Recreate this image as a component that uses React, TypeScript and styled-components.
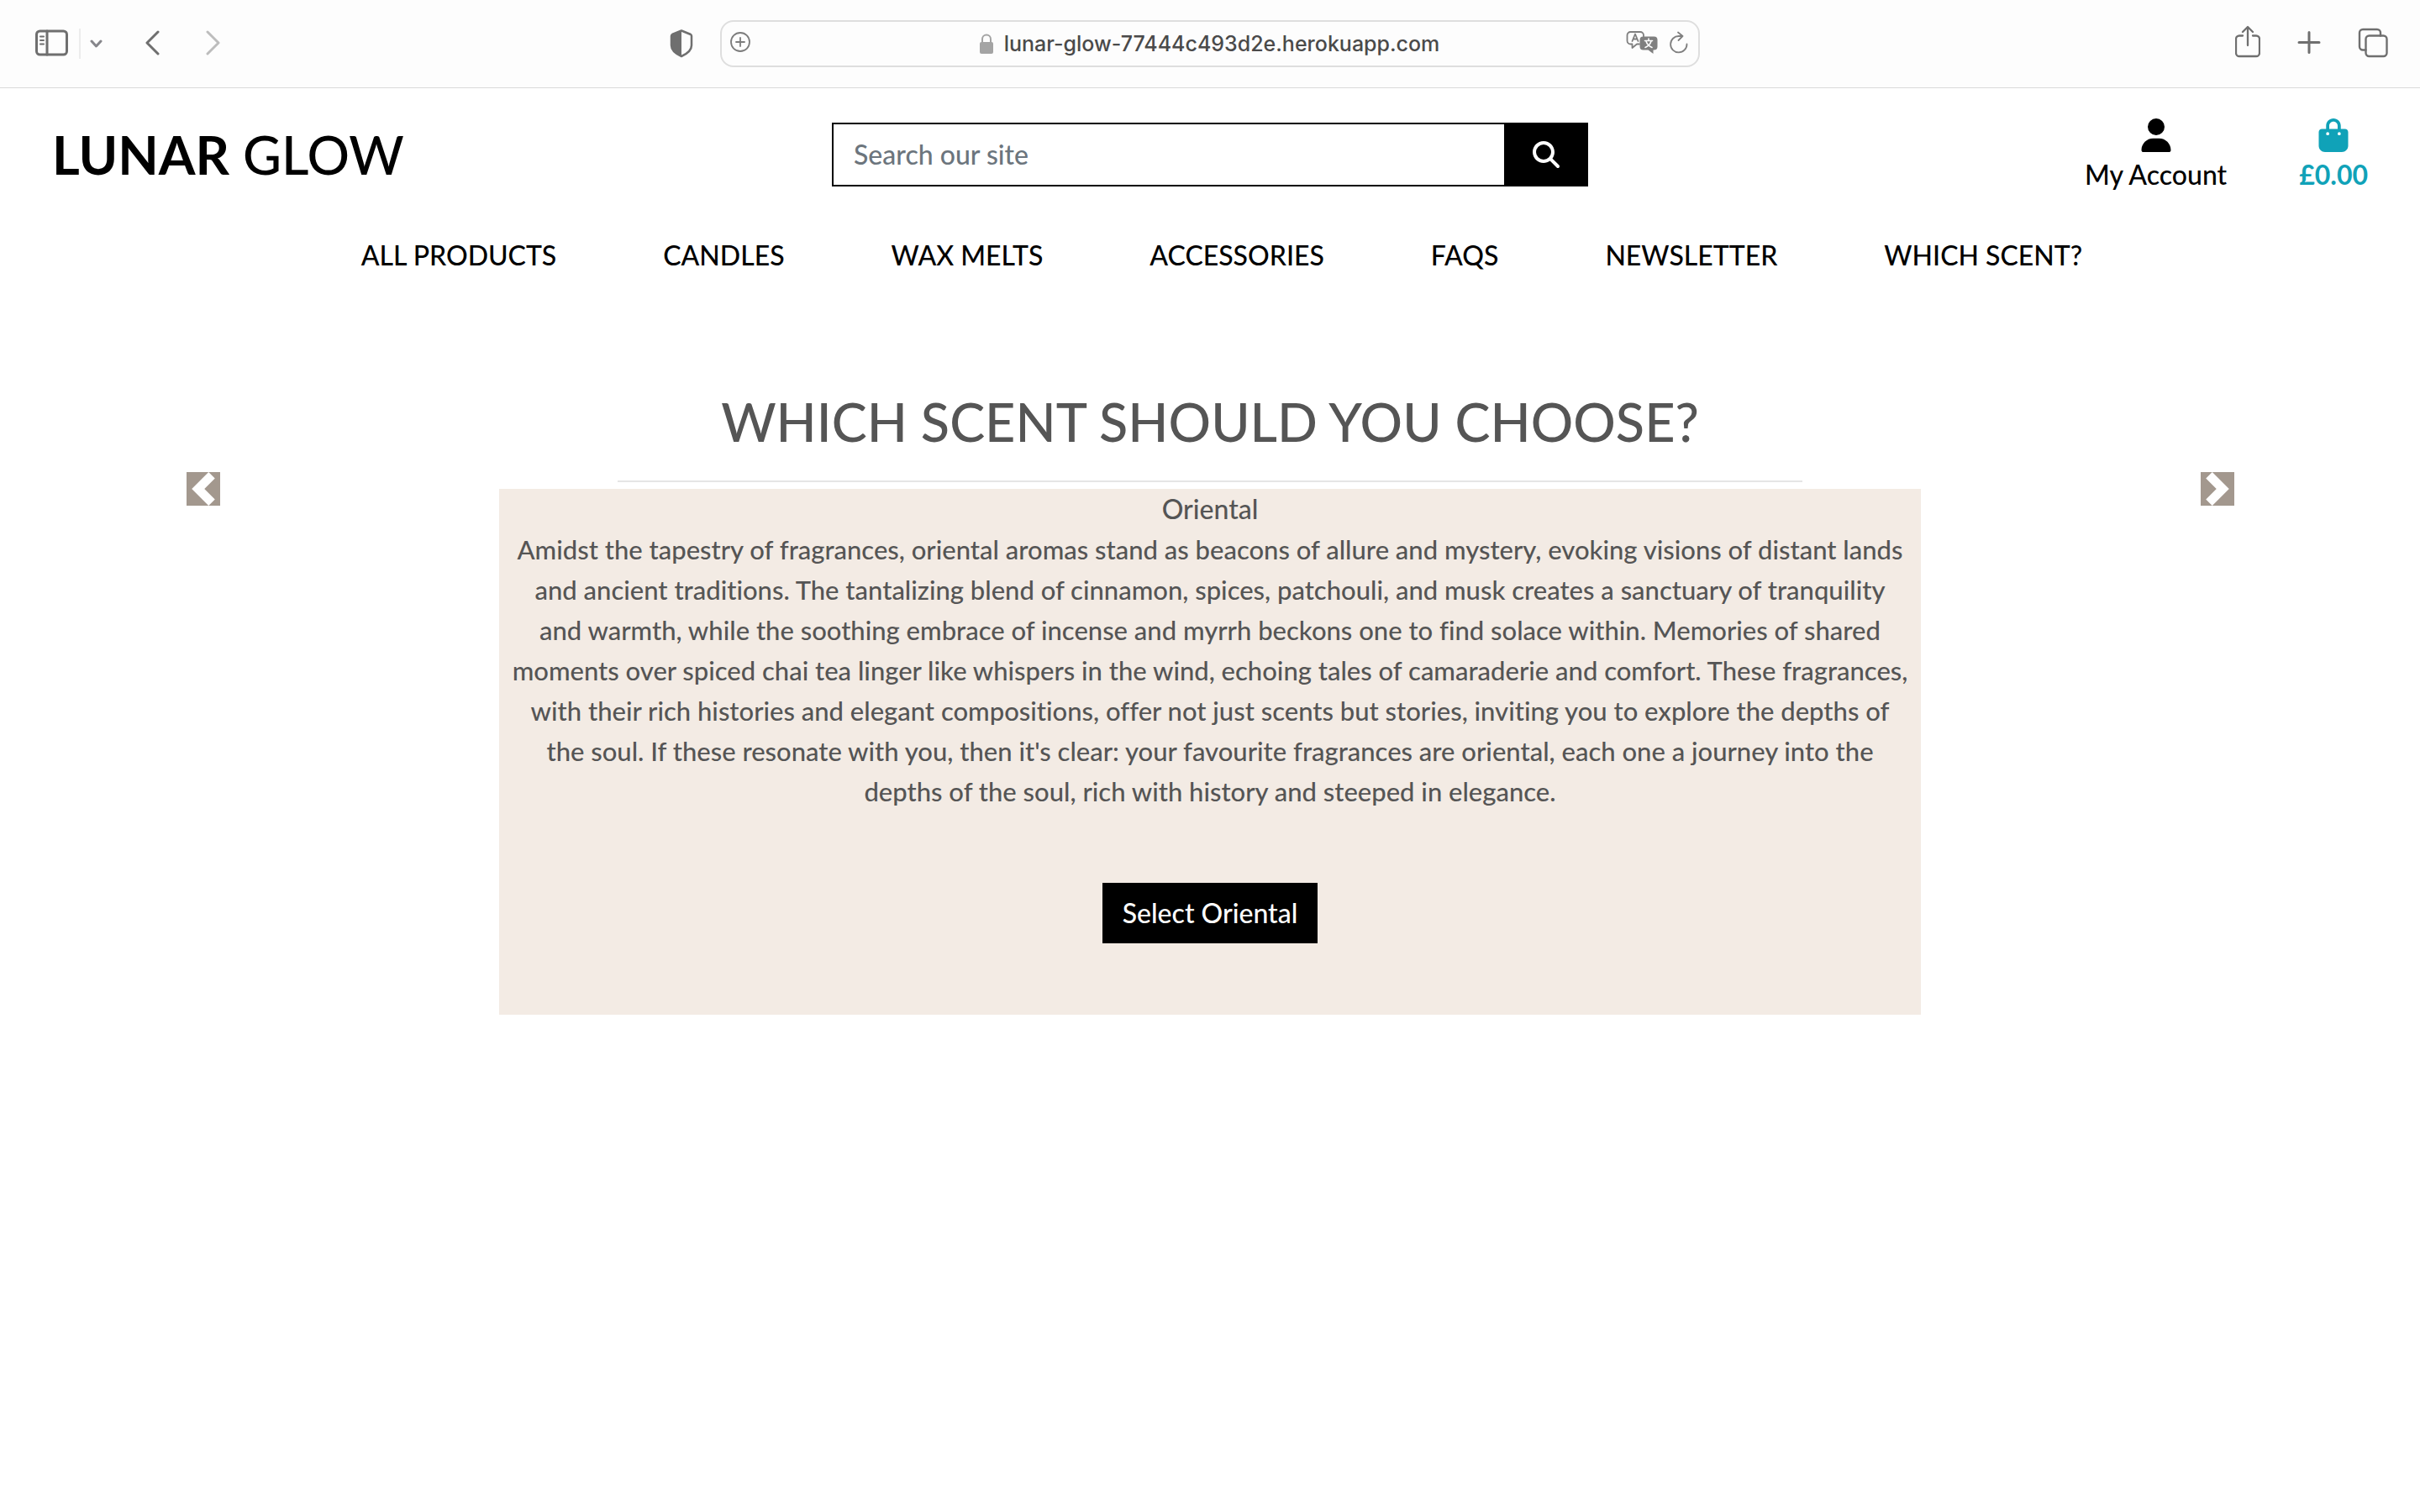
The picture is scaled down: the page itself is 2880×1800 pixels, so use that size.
import React, { Fragment } from "react";
import styled, { createGlobalStyle } from "styled-components";
import { FaBagShopping, FaMagnifyingGlass, FaUser } from "react-icons/fa6";

const GlobalStyle = createGlobalStyle`
  *, *::before, *::after { box-sizing: border-box; }
  body {
    margin: 0;
    background: #fff;
    color: #555;
    font-family: Lato, "Liberation Sans", sans-serif;
    font-size: 32px;
    font-weight: 500;
    line-height: 48px;
    font-variant-ligatures: none;
  }
  button, input { font: inherit; }
`;

/* ---------- Browser toolbar ---------- */

const Toolbar = styled.div`
  display: grid;
  grid-template-columns: minmax(0, 1fr) minmax(0, 1166px) minmax(0, 1fr);
  align-items: center;
  padding: 24px 38px;
  background: #fdfdfd;
  border-bottom: 1px solid #d9d9d9;
`;

const ToolGroup = styled.div<{ $end?: boolean; $gap?: number }>`
  display: flex;
  align-items: center;
  justify-content: ${(p) => (p.$end ? "flex-end" : "flex-start")};
  gap: ${(p) => p.$gap ?? 0}px;
`;

const ToolButton = styled.button<{ $tone?: string }>`
  display: flex;
  padding: 0;
  border: 0;
  background: none;
  color: ${(p) => p.$tone ?? "#6f6f6f"};

  svg {
    display: block;
    fill: none;
    stroke: currentColor;
    stroke-width: 3;
    stroke-linecap: round;
    stroke-linejoin: round;
  }
`;

const ToolDivider = styled.span`
  width: 2px;
  height: 36px;
  margin: 0 11px 0 12px;
  background: #ececec;
`;

const HistoryButtons = styled.div`
  display: flex;
  gap: 54px;
  margin-left: 50px;
`;

const ShieldSlot = styled.div`
  margin: 0 32px 0 auto;
`;

const AddressBar = styled.div`
  display: grid;
  grid-template-columns: 1fr auto 1fr;
  align-items: center;
  height: 56px;
  padding: 0 12px 0 10px;
  border: 2px solid #dedede;
  border-radius: 16px;
`;

const AddressLabel = styled.label`
  display: flex;
  align-items: center;
  gap: 12px;
  color: #a4a4a4;
`;

const AddressInput = styled.input`
  field-sizing: content;
  padding: 0;
  border: 0;
  background: none;
  color: #4a4a4a;
  font-family: Inter, "Liberation Sans", sans-serif;
  font-size: 25px;
  line-height: 36px;
`;

/* ---------- Shop header ---------- */

const Header = styled.header`
  padding: 36px 62px 0;
`;

const HeaderRow = styled.div`
  display: grid;
  grid-template-columns: minmax(0, 1fr) minmax(0, 900px) minmax(0, 1fr);
  align-items: center;
`;

const Logo = styled.a`
  color: #000;
  font-size: 63px;
  line-height: 78px;
  text-decoration: none;
`;

const SearchForm = styled.form`
  display: flex;
  height: 76px;
`;

const SearchInput = styled.input`
  flex: 1;
  min-width: 0;
  padding: 0 24px;
  border: 2px solid #000;
  border-right: 0;
  border-radius: 0;
  background: #fff;

  &::placeholder {
    color: #6c757d;
    opacity: 1;
  }
`;

const SearchButton = styled.button`
  display: flex;
  align-items: center;
  justify-content: center;
  width: 100px;
  border: 0;
  background: #000;
  color: #fff;
`;

const AccountLinks = styled.div`
  display: flex;
  justify-content: flex-end;
  gap: 86px;
`;

const AccountLink = styled.a<{ $accent?: boolean }>`
  display: flex;
  flex-direction: column;
  align-items: center;
  gap: 8px;
  color: ${(p) => (p.$accent ? "#10a2b8" : "#000")};
  font-weight: ${(p) => (p.$accent ? 700 : 500)};
  line-height: 38px;
  text-decoration: none;
`;

const Nav = styled.nav`
  display: flex;
  justify-content: center;
  gap: 127px;
  margin-top: 53px;
  padding-left: 28px;
`;

const NavLink = styled.a`
  color: #000;
  text-decoration: none;
  text-transform: uppercase;
  white-space: nowrap;
`;

/* ---------- Scent carousel ---------- */

const Carousel = styled.main`
  display: grid;
  grid-template-columns: 15% minmax(0, 1fr) 15%;
  align-items: start;
  margin: 135px 30px 0;
`;

const CarouselControl = styled.button`
  justify-self: center;
  width: 40px;
  height: 40px;
  margin-top: 99px;
  padding: 0;
  border: 0;
  background: #a3988e;

  svg {
    display: block;
    fill: #fff;
  }
`;

const Slide = styled.section`
  display: flex;
  flex-direction: column;
  align-items: center;
  text-align: center;
`;

const Title = styled.h1`
  margin: 0;
  font-size: 63px;
  font-weight: 500;
  line-height: 78px;
  text-transform: uppercase;
`;

const Rule = styled.hr`
  width: 1410px;
  max-width: 100%;
  margin: 31px 0 8px;
  border: 0;
  border-top: 2px solid #e5e5e5;
`;

const ScentCard = styled.article`
  width: 1692px;
  max-width: 100%;
  padding-bottom: 85px;
  background: #f3ebe4;
`;

const ScentName = styled.h2`
  margin: 0;
  font: inherit;
`;

const ScentText = styled.p`
  margin: 0 0 85px;
  font-size: 31px;
`;

const SelectButton = styled.button`
  display: block;
  height: 72px;
  margin: 0 auto;
  padding: 0 24px;
  border: 0;
  background: #000;
  color: #fff;
`;

const links = ["All Products", "Candles", "Wax Melts", "Accessories", "FAQs", "Newsletter", "Which Scent?"];

const scentLines = [
  "Amidst the tapestry of fragrances, oriental aromas stand as beacons of allure and mystery, evoking visions of distant lands",
  "and ancient traditions. The tantalizing blend of cinnamon, spices, patchouli, and musk creates a sanctuary of tranquility",
  "and warmth, while the soothing embrace of incense and myrrh beckons one to find solace within. Memories of shared",
  "moments over spiced chai tea linger like whispers in the wind, echoing tales of camaraderie and comfort. These fragrances,",
  "with their rich histories and elegant compositions, offer not just scents but stories, inviting you to explore the depths of",
  "the soul. If these resonate with you, then it's clear: your favourite fragrances are oriental, each one a journey into the",
  "depths of the soul, rich with history and steeped in elegance.",
];

function BrowserToolbar() {
  return (
    <Toolbar>
      <ToolGroup>
        <ToolButton aria-label="Show sidebar">
          <svg width="44" height="44" viewBox="-4 0 44 44">
            <rect x="1.5" y="7" width="36" height="28" rx="4" />
            <path d="M14 7v28" />
            <path strokeWidth="2" d="M6 13.500h4M6 18h4M6 22.500h4" />
          </svg>
        </ToolButton>
        <ToolDivider />
        <ToolButton aria-label="Tab groups" $tone="#86868b">
          <svg width="16" height="44" viewBox="0 0 16 44">
            <path d="M2 19l5.500 6 5.500-6" />
          </svg>
        </ToolButton>
        <HistoryButtons>
          <ToolButton aria-label="Back">
            <svg width="18" height="44" viewBox="0 0 18 44">
              <path d="M15 8L2 21l13 13" />
            </svg>
          </ToolButton>
          <ToolButton aria-label="Forward" $tone="#bdbdbd">
            <svg width="18" height="44" viewBox="0 0 18 44">
              <path d="M2 8l13 13L2 34" />
            </svg>
          </ToolButton>
        </HistoryButtons>
        <ShieldSlot>
          <ToolButton aria-label="Privacy report">
            <svg width="28" height="44" viewBox="0 0 28 44">
              <path strokeWidth="2.500" d="M14 6.500l11 4.500q1 .5 1 2v11c0 6-4 9.500-12 13C6 33.500 2 30 2 24V13q0-1.500 1-2z" />
              <path fill="currentColor" stroke="none" d="M14 6v31C6 33.500 2 30 2 24V13q0-1.500 1-2z" />
            </svg>
          </ToolButton>
        </ShieldSlot>
      </ToolGroup>

      <AddressBar>
        <ToolGroup>
          <ToolButton aria-label="Add to reading list" $tone="#7c7c7c">
            <svg width="24" height="44" viewBox="0 0 24 44">
              <g strokeWidth="1.800">
                <circle cx="12" cy="20" r="11" />
                <path d="M12 15v10M7 20h10" />
              </g>
            </svg>
          </ToolButton>
        </ToolGroup>
        <AddressLabel>
          <svg width="18" height="44" viewBox="0 0 18 44">
            <rect x="1" y="20" width="16" height="14" rx="2" fill="currentColor" />
            <path d="M4 20v-3.500a5 5 0 0 1 10 0V20" fill="none" stroke="currentColor" strokeWidth="2" />
          </svg>
          <AddressInput aria-label="Address" defaultValue="lunar-glow-77444c493d2e.herokuapp.com" />
        </AddressLabel>
        <ToolGroup $end $gap={14}>
          <ToolButton aria-label="Translate" $tone="#7f7f7f">
            <svg width="38" height="44" viewBox="0 0 38 44">
              <path strokeWidth="1.800" d="M16 22.500h-3L7.500 27v-4.500H5.500a4 4 0 0 1-4-4V12a4 4 0 0 1 4-4H17a4 4 0 0 1 4 4v1.500" />
              <path strokeWidth="1.800" d="M7.500 19L11 10.500 14.500 19M8.700 16.500h4.600" />
              <path
                fill="currentColor"
                stroke="none"
                d="M20.500 13.500H33.500a4 4 0 0 1 4 4V25.500a4 4 0 0 1-4 4H32.500V34L26.500 29.500H20.500a4 4 0 0 1-4-4V17.500a4 4 0 0 1 4-4z"
              />
              <path stroke="#fdfdfd" strokeWidth="1.600" d="M27 16v2.500M22.500 18.500h9M30 19c-1 3.500-3.500 6-7 7.500M24 19c1 3.500 3.500 6 7 7.500" />
            </svg>
          </ToolButton>
          <ToolButton aria-label="Reload" $tone="#7f7f7f">
            <svg width="22" height="44" viewBox="0 0 22 44">
              <path strokeWidth="1.800" d="M20.500 22.500A9.700 9.700 0 1 1 11 13h4.500M10 8.500l5.500 4.500-5 5" />
            </svg>
          </ToolButton>
        </ToolGroup>
      </AddressBar>

      <ToolGroup $end $gap={44}>
        <ToolButton aria-label="Share">
          <svg width="30" height="44" viewBox="0 0 30 44">
            <path strokeWidth="2.300" d="M9 12.500H5a4 4 0 0 0-4 4V33a4 4 0 0 0 4 4h20a4 4 0 0 0 4-4V16.500a4 4 0 0 0-4-4h-4M15 24V2.500M9 8l6-6 6 6" />
          </svg>
        </ToolButton>
        <ToolButton aria-label="New tab">
          <svg width="28" height="44" viewBox="0 0 28 44">
            <path d="M14 8.500v24M2 20.500h24" />
          </svg>
        </ToolButton>
        <ToolButton aria-label="Show all tabs">
          <svg width="36" height="44" viewBox="0 0 36 44">
            <rect strokeWidth="2.400" x="9.500" y="12.500" width="25" height="24.500" rx="4" />
            <path strokeWidth="2.400" d="M9.500 29.500H6a4 4 0 0 1-4-4V9a4 4 0 0 1 4-4h17a4 4 0 0 1 4 4v3.500" />
          </svg>
        </ToolButton>
      </ToolGroup>
    </Toolbar>
  );
}

export default function App() {
  return (
    <>
      <GlobalStyle />
      <BrowserToolbar />

      <Header>
        <HeaderRow>
          <Logo href="#home">
            <strong>LUNAR</strong> GLOW
          </Logo>
          <SearchForm role="search" onSubmit={(e) => e.preventDefault()}>
            <SearchInput type="search" aria-label="Search our site" placeholder="Search our site" />
            <SearchButton type="submit" aria-label="Search">
              <FaMagnifyingGlass size={32} />
            </SearchButton>
          </SearchForm>
          <AccountLinks>
            <AccountLink href="#account">
              <FaUser size={40} />
              My Account
            </AccountLink>
            <AccountLink href="#bag" $accent>
              <FaBagShopping size={40} />
              £0.00
            </AccountLink>
          </AccountLinks>
        </HeaderRow>

        <Nav>
          {links.map((label) => (
            <NavLink key={label} href="#shop">
              {label}
            </NavLink>
          ))}
        </Nav>
      </Header>

      <Carousel>
        <CarouselControl aria-label="Previous">
          <svg width="40" height="40" viewBox="0 0 8 8">
            <path d="M5.250 0l-4 4 4 4 1.500-1.500L4.250 4l2.500-2.500L5.250 0z" />
          </svg>
        </CarouselControl>
        <Slide>
          <Title>Which scent should you choose?</Title>
          <Rule />
          <ScentCard>
            <ScentName>Oriental</ScentName>
            <ScentText>
              {scentLines.map((line, i) => (
                <Fragment key={line}>
                  {i > 0 && <br />}
                  {line}
                </Fragment>
              ))}
            </ScentText>
            <SelectButton>Select Oriental</SelectButton>
          </ScentCard>
        </Slide>
        <CarouselControl aria-label="Next">
          <svg width="40" height="40" viewBox="0 0 8 8">
            <path d="M2.750 0l-1.500 1.500L3.750 4l-2.500 2.500L2.750 8l4-4-4-4z" />
          </svg>
        </CarouselControl>
      </Carousel>
    </>
  );
}
